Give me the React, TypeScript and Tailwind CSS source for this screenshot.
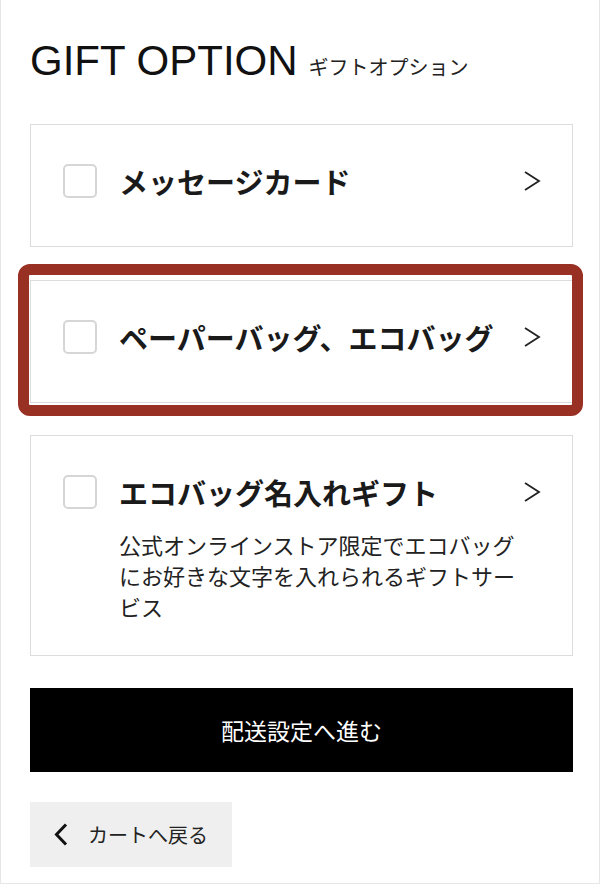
import React from "react";

const jp = '"Noto Sans CJK JP", "Noto Sans", sans-serif';

function Checkbox() {
  return (
    <div className="w-[34px] h-[34px] shrink-0 rounded-[5px] border-[2.5px] border-[#d6d6d6] bg-white" />
  );
}

function Chevron() {
  return (
    <svg width="18" height="20" viewBox="0 0 18 20" className="shrink-0">
      <polyline points="2,1 16,10 2,19" fill="none" stroke="#222" strokeWidth="1.8" strokeLinejoin="miter" />
    </svg>
  );
}

function OptionCard({
  title,
  desc,
  pb,
}: {
  title: string;
  desc?: string;
  pb: string;
}) {
  return (
    <div className={`border border-[#dcdcdc] bg-white pl-[32px] pr-[31px] pt-[39px] ${pb}`}>
      <div className="flex items-center h-[34px]">
        <Checkbox />
        <div
          className="ml-[22px] flex-1 text-[29px] leading-[34px] font-semibold text-[#1a1a1a] whitespace-nowrap"
          style={{ fontFamily: jp }}
        >
          {title}
        </div>
        <Chevron />
      </div>
      {desc && (
        <div
          className="ml-[56px] mt-[20px] max-w-[405px] text-[22px] leading-[31px] text-[#222]"
          style={{ fontFamily: jp }}
        >
          {desc}
        </div>
      )}
    </div>
  );
}

export default function App() {
  return (
    <div className="w-[600px] h-[885px] bg-white overflow-hidden">
      <div className="w-[600px] h-[884px] border-x border-b border-[#e6e6e6] pl-[29px] pr-[26px]">
        <div className="flex items-baseline pt-[40px] h-[82px]">
          <span
            className="text-[42px] leading-[42px] text-[#111] tracking-[0px]"
            style={{ fontFamily: '"Liberation Sans", Arial, sans-serif' }}
          >
            GIFT OPTION
          </span>
          <span
            className="ml-[11px] text-[20px] text-[#222]"
            style={{ fontFamily: jp }}
          >
            ギフトオプション
          </span>
        </div>

        <div className="mt-[42px] flex flex-col">
          <OptionCard title="メッセージカード" pb="pb-[48px]" />
          <div className="relative mt-[33px]">
            <OptionCard title="ペーパーバッグ、エコバッグ" pb="pb-[48px]" />
            <div className="absolute left-[-12px] right-[-10px] top-[-16px] bottom-[-13px] rounded-[12px] border-[11px] border-[#993024] pointer-events-none" />
          </div>
          <div className="mt-[32px]">
            <OptionCard
              title="エコバッグ名入れギフト"
              desc="公式オンラインストア限定でエコバッグにお好きな文字を入れられるギフトサービス"
              pb="pb-[33px]"
            />
          </div>
        </div>

        <div
          className="mt-[32px] h-[84px] bg-black flex items-center justify-center text-white text-[23px]"
          style={{ fontFamily: jp }}
        >
          配送設定へ進む
        </div>

        <div
          className="mt-[30px] w-[202px] h-[65px] bg-[#efefef] flex items-center pl-[24px]"
          style={{ fontFamily: jp }}
        >
          <svg width="14" height="23" viewBox="0 0 14 23" className="shrink-0">
            <polyline points="12,1.5 2.5,11.5 12,21.5" fill="none" stroke="#111" strokeWidth="3" />
          </svg>
          <span className="ml-[20px] text-[20px] text-[#222]">カートへ戻る</span>
        </div>
      </div>
    </div>
  );
}
